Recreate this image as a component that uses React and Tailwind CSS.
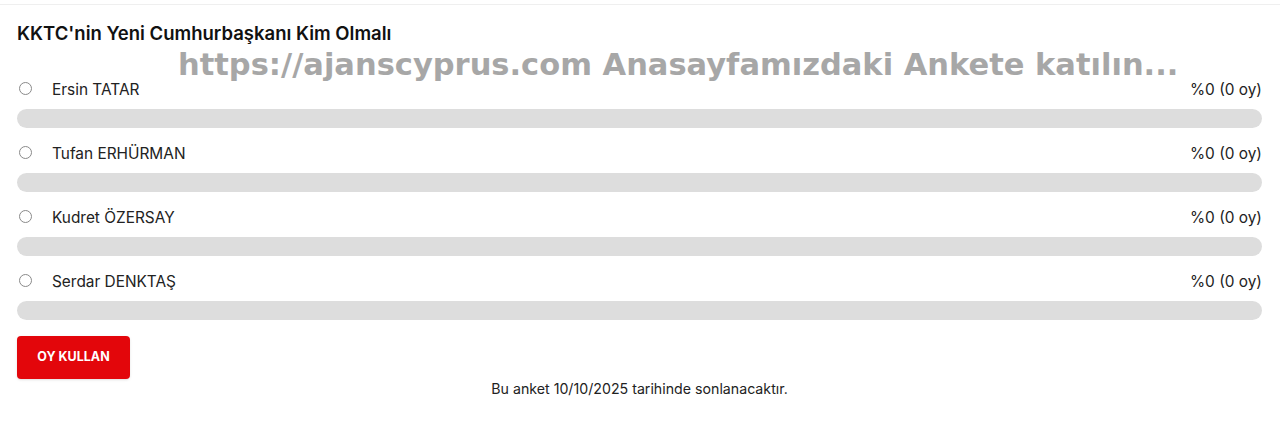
const options = [
  { id: 'tatar', name: 'Ersin TATAR', pct: 0, votes: 0 },
  { id: 'erhurman', name: 'Tufan ERHÜRMAN', pct: 0, votes: 0 },
  { id: 'ozersay', name: 'Kudret ÖZERSAY', pct: 0, votes: 0 },
  { id: 'denktas', name: 'Serdar DENKTAŞ', pct: 0, votes: 0 },
];

function PollRow({ option }) {
  return (
    <div className="pb-[16px]">
      <div className="flex items-center h-[20px] text-[15.4px] text-[#222]">
        <span className="ml-[2px] w-[13px] h-[13px] rounded-full border border-[#8a8a8a] bg-white -mt-[4px]" />
        <span className="ml-[20px]">{option.name}</span>
        <span className="ml-auto">%{option.pct} ({option.votes} oy)</span>
      </div>
      <div className="mt-[9px] h-[19px] rounded-full bg-[#dddddd] overflow-hidden">
        <div className="h-full bg-[#e30613]" style={{ width: `${option.pct}%` }} />
      </div>
    </div>
  );
}

export default function App() {
  return (
    <div className="w-[1280px] h-[429px] bg-white font-['Inter',sans-serif] overflow-hidden">
      <div className="mt-[4px] border-t border-[#efefef] pl-[17px] pr-[18px] pt-[16px]">
        <h2 className="text-[18.5px] font-semibold leading-[24px] text-[#111]">
          KKTC'nin Yeni Cumhurbaşkanı Kim Olmalı
        </h2>
        <p className="mt-[5px] ml-[161px] h-[30px] leading-[30px] text-[30.5px] font-bold text-[#a7a7a7] font-['DejaVu_Sans',sans-serif] whitespace-nowrap">
          https://ajanscyprus.com Anasayfamızdaki Ankete katılın...
        </p>
        {options.map(o => (
          <PollRow key={o.id} option={o} />
        ))}
        <button className="w-[113px] h-[43px] rounded-[4px] bg-[#e3060b] text-white text-[12.5px] font-bold shadow-sm">
          OY KULLAN
        </button>
        <p className="text-center text-[14.2px] leading-[20px] text-[#222]">
          Bu anket 10/10/2025 tarihinde sonlanacaktır.
        </p>
      </div>
    </div>
  );
}
